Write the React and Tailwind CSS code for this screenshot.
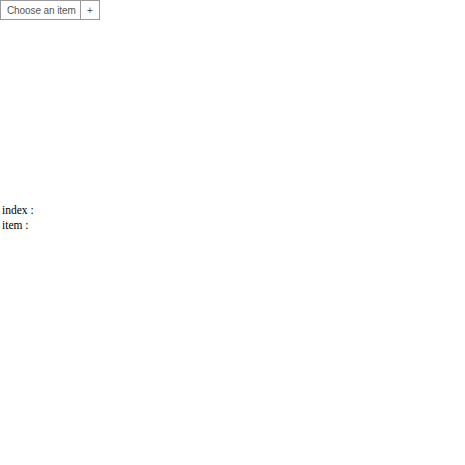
export default function App() {
  return (
    <div className="bg-white w-[465px] h-[465px]">
      <div className="flex h-[20px] w-[100px] border border-[#9a9a9a] text-[10px] text-[#555] font-['Liberation_Sans',sans-serif]">
        <div className="flex items-center shrink-0 pl-[6px] w-[80px] border-r border-[#9a9a9a] whitespace-nowrap overflow-hidden tracking-[-0.1px]">Choose an item</div>
        <div className="flex items-center justify-center flex-1 shrink-0">+</div>
      </div>
      <div className="h-[183px]"></div>
      <div className="font-['Liberation_Serif',serif] text-[11.5px] leading-[15px] text-black pl-[2px]">
        <div>index :</div>
        <div>item :</div>
      </div>
    </div>
  );
}
